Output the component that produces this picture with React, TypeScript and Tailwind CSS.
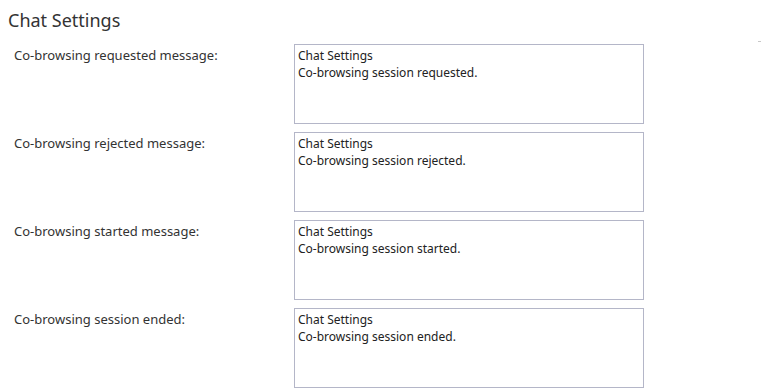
const FONT = { fontFamily: '"Noto Sans", "Open Sans", sans-serif' };

const rows = [
  { label: 'Co-browsing requested message:', text: 'Chat Settings\nCo-browsing session requested.' },
  { label: 'Co-browsing rejected message:', text: 'Chat Settings\nCo-browsing session rejected.' },
  { label: 'Co-browsing started message:', text: 'Chat Settings\nCo-browsing session started.' },
  { label: 'Co-browsing session ended:', text: 'Chat Settings\nCo-browsing session ended.' },
];

export default function App() {
  return (
    <div className="relative w-[763px] h-[392px] overflow-hidden bg-white text-[#333333]" style={FONT}>
      <h2 className="pl-2 pt-[8px] text-[18px] leading-[24px] font-normal text-[#333333]">Chat Settings</h2>
      <div className="mt-[12px] flex flex-col gap-2 pl-[14px]">
        {rows.map((r) => (
          <div key={r.label} className="flex">
            <label className="w-[280px] pt-[2px] text-[13px] leading-[18px]">{r.label}</label>
            <textarea
              readOnly
              defaultValue={r.text}
              className="w-[350px] h-[80px] resize-none border border-[#b4b6c8] px-[3px] py-[2px] text-[12px] leading-[17px] text-[#222222] outline-none"
              style={FONT}
            />
          </div>
        ))}
      </div>
      <div className="absolute left-[758px] top-[41px] h-px w-[3px] bg-[#c8c8c8]" />
    </div>
  );
}
